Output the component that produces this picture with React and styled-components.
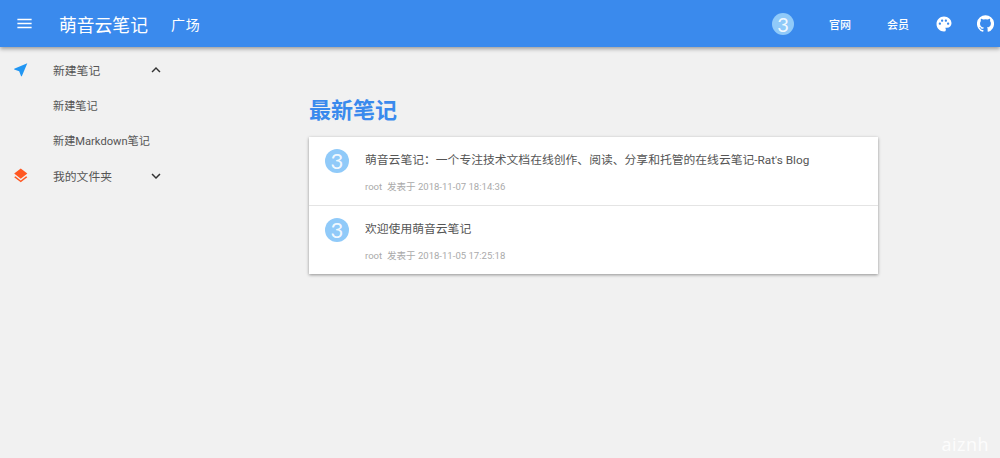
import React from "react";
import styled, { createGlobalStyle } from "styled-components";
import { MdMenu, MdNearMe, MdLayers, MdExpandLess, MdExpandMore, MdPalette } from "react-icons/md";

const GlobalStyle = createGlobalStyle`
  html, body {
    margin: 0;
    padding: 0;
    height: 100%;
  }
  body {
    background: #f1f1f1;
    font-family: Roboto, "Noto Sans CJK SC", sans-serif;
    overflow: hidden;
  }
`;

const Page = styled.div`
  position: relative;
  width: 1000px;
  height: 458px;
  overflow: hidden;
`;

const Bar = styled.header`
  position: relative;
  z-index: 2;
  height: 47px;
  background: #3a8aed;
  box-shadow: 0 2px 4px rgba(0, 0, 0, 0.35);
  display: flex;
  align-items: center;
  color: #fff;
  padding: 0 6px 0 14.5px;
`;

const MenuButton = styled(MdMenu)`
  width: 19px;
  height: 19px;
  margin-right: 25.5px;
`;

const Brand = styled.div`
  font-size: 17.8px;
  width: 112px;
  white-space: nowrap;
`;

const Square = styled.div`
  font-size: 14px;
  letter-spacing: 0.8px;
  white-space: nowrap;
`;

const Spacer = styled.div`
  flex: 1;
`;

const Avatar = styled.div`
  width: ${(p) => p.size}px;
  height: ${(p) => p.size}px;
  flex: none;
  border-radius: 50%;
  background: #90caf9;
  color: rgba(255, 255, 255, 0.9);
  display: flex;
  align-items: center;
  justify-content: center;
  font-family: Lato, sans-serif;
  font-weight: 400;
  font-size: ${(p) => p.size - 2}px;
  line-height: 1;
`;

const BarLink = styled.a`
  font-size: 11px;
  font-weight: 500;
  color: #fff;
  margin-left: ${(p) => p.gap}px;
  white-space: nowrap;
`;

const Palette = styled(MdPalette)`
  width: 18px;
  height: 18px;
  margin-left: 26px;
`;

const GithubMark = styled.svg`
  width: 17px;
  height: 17px;
  margin-left: 24px;
  fill: currentColor;
`;

const Body = styled.div`
  display: flex;
`;

const Side = styled.nav`
  width: 173px;
  flex: none;
  padding-top: 5px;
`;

const SideRow = styled.div`
  height: 35.3px;
  display: flex;
  align-items: center;
  padding-left: 12px;
  color: #555;
  font-size: 11.8px;
  white-space: nowrap;
`;

const SideSub = styled(SideRow)`
  padding-left: 53px;
  font-size: 11.15px;
`;

const SideIcon = styled.span`
  width: 41px;
  flex: none;
  display: flex;
  color: ${(p) => p.color};
  font-size: 17.5px;
`;

const SideLabel = styled.span`
  width: 94px;
  flex: none;
`;

const Chevron = styled.span`
  display: flex;
  color: #333;
  font-size: 18px;
`;

const Main = styled.main`
  width: 569px;
  margin-left: 136px;
`;

const Title = styled.h1`
  margin: 0;
  padding-top: 49px;
  height: 41px;
  font-size: 22px;
  line-height: 29px;
  font-weight: 700;
  color: #3a8aed;
  white-space: nowrap;
`;

const Card = styled.section`
  background: #fff;
  box-shadow: 0 1px 3px rgba(0, 0, 0, 0.4);
`;

const Note = styled.article`
  height: 68px;
  display: flex;
  padding: 12px 0 0 16px;
  box-sizing: border-box;
  & + & {
    border-top: 1px solid #e4e4e4;
    height: 69px;
  }
`;

const NoteText = styled.div`
  margin-left: 16px;
  padding-top: 1px;
  min-width: 0;
`;

const NoteTitle = styled.div`
  font-size: 11.8px;
  line-height: 20px;
  color: #555;
  white-space: nowrap;
`;

const NoteMeta = styled.div`
  margin-top: 10px;
  font-size: 9.55px;
  line-height: 14px;
  color: #aaa;
  white-space: nowrap;
`;

const Watermark = styled.div`
  position: absolute;
  right: 11px;
  bottom: 2px;
  font-family: "Open Sans", sans-serif;
  font-size: 18px;
  letter-spacing: 0.5px;
  color: rgba(255, 255, 255, 0.85);
`;

const notes = [
  {
    title: "萌音云笔记：一个专注技术文档在线创作、阅读、分享和托管的在线云笔记-Rat's Blog",
    time: "2018-11-07 18:14:36",
  },
  { title: "欢迎使用萌音云笔记", time: "2018-11-05 17:25:18" },
];

export default function App() {
  return (
    <Page>
      <GlobalStyle />
      <Bar>
        <MenuButton />
        <Brand>萌音云笔记</Brand>
        <Square>广场</Square>
        <Spacer />
        <Avatar size={22}>3</Avatar>
        <BarLink gap={35}>官网</BarLink>
        <BarLink gap={36}>会员</BarLink>
        <Palette />
        <GithubMark viewBox="0 0 24 24">
          <path d="M12 .3a12 12 0 0 0-3.8 23.4c.6.1.8-.3.8-.6v-2c-3.3.7-4-1.6-4-1.6-.6-1.4-1.4-1.8-1.4-1.8-1-.7.1-.7.1-.7 1.2 0 1.9 1.2 1.9 1.2 1 1.8 2.8 1.3 3.5 1 0-.8.4-1.3.7-1.6-2.7-.3-5.5-1.3-5.5-6 0-1.2.5-2.3 1.3-3.1-.2-.4-.6-1.6 0-3.2 0 0 1-.3 3.4 1.2a11.5 11.5 0 0 1 6 0c2.3-1.5 3.3-1.2 3.3-1.2.6 1.6.2 2.8 0 3.2.9.8 1.3 1.9 1.3 3.2 0 4.6-2.8 5.6-5.5 5.9.5.4.9 1 .9 2.2v3.3c0 .3.1.7.8.6A12 12 0 0 0 12 .3" />
        </GithubMark>
      </Bar>
      <Body>
        <Side>
          <SideRow>
            <SideIcon color="#2196f3"><MdNearMe /></SideIcon>
            <SideLabel>新建笔记</SideLabel>
            <Chevron><MdExpandLess /></Chevron>
          </SideRow>
          <SideSub>新建笔记</SideSub>
          <SideSub>新建Markdown笔记</SideSub>
          <SideRow>
            <SideIcon color="#ff5722"><MdLayers /></SideIcon>
            <SideLabel>我的文件夹</SideLabel>
            <Chevron><MdExpandMore /></Chevron>
          </SideRow>
        </Side>
        <Main>
          <Title>最新笔记</Title>
          <Card>
            {notes.map((note) => (
              <Note key={note.time}>
                <Avatar size={24}>3</Avatar>
                <NoteText>
                  <NoteTitle>{note.title}</NoteTitle>
                  <NoteMeta>root&nbsp; 发表于 {note.time}</NoteMeta>
                </NoteText>
              </Note>
            ))}
          </Card>
        </Main>
      </Body>
      <Watermark>aiznh</Watermark>
    </Page>
  );
}
